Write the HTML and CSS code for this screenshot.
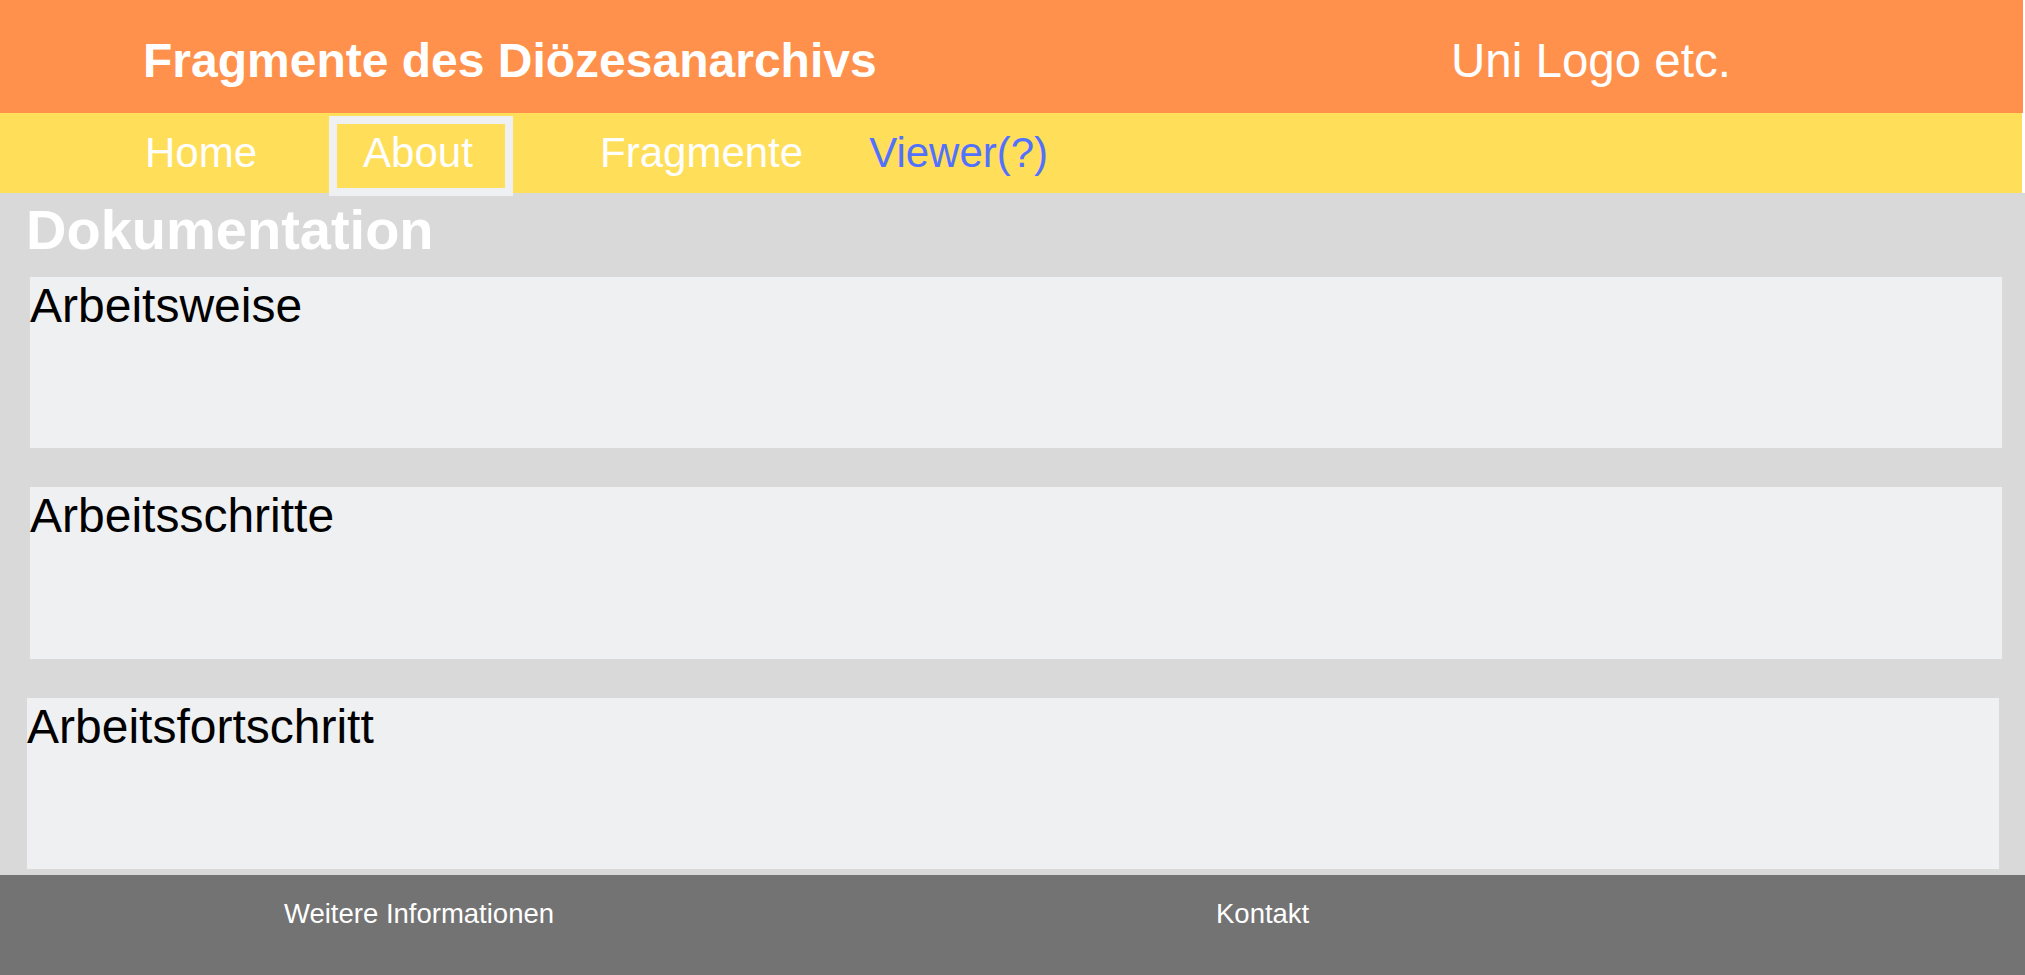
FILE: index.html
```html
<!DOCTYPE html>
<html lang="de">
<head>
<meta charset="utf-8">
<title>Fragmente des Diözesanarchivs</title>
<link rel="stylesheet" href="styles.css">
</head>
<body>
<header class="header">
  <div class="title">Fragmente des Diözesanarchivs</div>
  <div class="logo">Uni Logo etc.</div>
</header>
<nav class="nav">
  <a class="nav-item nav-home">Home</a>
  <a class="nav-item nav-about">About</a>
  <a class="nav-item nav-fragmente">Fragmente</a>
  <a class="nav-item nav-viewer">Viewer(?)</a>
</nav>
<main class="main">
  <h1 class="heading">Dokumentation</h1>
  <section class="card">Arbeitsweise</section>
  <section class="card card--tall">Arbeitsschritte</section>
  <section class="card card--shift">Arbeitsfortschritt</section>
</main>
<footer class="footer">
  <span class="footer-item footer-info">Weitere Informationen</span>
  <span class="footer-item">Kontakt</span>
</footer>
</body>
</html>
```
FILE: styles.css
```css
* { box-sizing: border-box; }

html, body {
  margin: 0;
  padding: 0;
}

body {
  background: #ffffff;
  font-family: "Liberation Sans", Arial, sans-serif;
  width: 2025px;
  height: 975px;
  overflow: hidden;
}

.header {
  width: 2023px;
  height: 113px;
  background: #FF914D;
  display: flex;
  align-items: baseline;
  padding: 33px 0 0 143px;
  color: #ffffff;
}

.title {
  flex: 0 0 1308px;
  font-weight: bold;
  font-size: 48px;
}

.logo {
  font-weight: normal;
  font-size: 47.5px;
}

.nav {
  width: 2022px;
  height: 80px;
  background: #FFDE59;
  display: flex;
  align-items: baseline;
  padding: 3px 0 0 145px;
  font-size: 42px;
  color: #ffffff;
}

.nav-item {
  color: #ffffff;
  text-decoration: none;
}

.nav-about {
  margin-left: 72px;
  width: 184px;
  height: 80px;
  border: 8px solid #EFF0F2;
  padding: 5px 0 0 26px;
  position: relative;
  z-index: 1;
}

.nav-fragmente {
  margin-left: 87px;
}

.nav-viewer {
  margin-left: 66px;
  color: #5271FF;
}

.main {
  background: #D9D9D9;
  padding: 5px 0 6px 0;
}

.heading {
  margin: 0 0 16px 0;
  padding-left: 26px;
  font-size: 56px;
  line-height: 63px;
  font-weight: bold;
  color: #ffffff;
}

.card {
  width: 1972px;
  height: 171px;
  margin: 0 0 39px 30px;
  padding-top: 1px;
  background: #EFF0F2;
  color: #000000;
  font-size: 48px;
}

.card--tall {
  height: 172px;
}

.card--shift {
  margin: 0 0 0 27px;
}

.footer {
  height: 100px;
  background: #737373;
  display: flex;
  padding: 23px 0 0 284px;
  color: #ffffff;
  font-size: 27.5px;
}

.footer-info {
  flex: 0 0 932px;
}
```
